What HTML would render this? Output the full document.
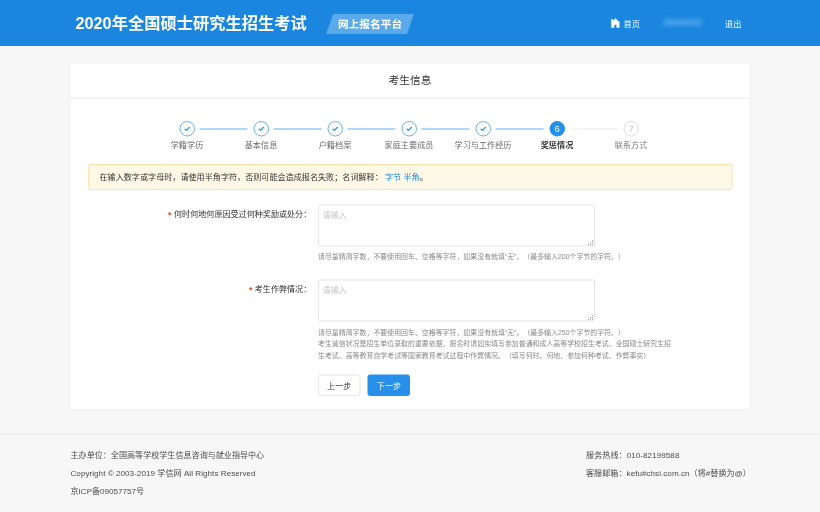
<!DOCTYPE html>
<html lang="zh-CN">
<head>
<meta charset="utf-8">
<title>2020年全国硕士研究生招生考试 网上报名平台</title>
<style>
*{box-sizing:border-box;margin:0;padding:0}
html,body{width:820px;height:512px;overflow:hidden;background:#f7f7f7}
body{text-spacing-trim:space-all;font-family:"Liberation Sans","Noto Sans CJK SC",sans-serif;color:#333}
#stage{position:absolute;left:0;top:0;width:1640px;height:1024px;transform:scale(.5);transform-origin:0 0;background:#f7f7f7;overflow:hidden;font-size:16px}
.abs{position:absolute;white-space:nowrap}
/* header */
#hdr{position:absolute;left:0;top:0;width:1640px;height:91.5px;background:#1a86e0}
#title{left:151px;top:22px;font-size:32.5px;line-height:50px;font-weight:bold;color:#fff;letter-spacing:0}
#badge{position:absolute;left:652px;top:27.2px;width:176px;height:41.2px;background:#5aa9eb;clip-path:polygon(14.6px 0,100% 0,162px 100%,0 100%)}
#badgetxt{left:652.5px;top:28.5px;width:175px;height:40px;line-height:40px;text-align:center;color:#fff;font-weight:bold;font-size:21.4px}
.nav{color:#fff;font-size:16.4px;line-height:24px;top:35px}
#blur{position:absolute;left:1326px;top:39px;width:78px;height:12px;border-radius:6px;background:#4fa3ea;filter:blur(5px)}
/* card */
#card{position:absolute;left:141px;top:127px;width:1358px;height:691px;background:#fff;box-shadow:0 0 0 2px #f1f1f1,2px 2px 6px rgba(0,0,0,.04)}
#cardhd{position:absolute;left:0;top:0;width:100%;height:71px;border-bottom:3px solid #f1f1f1;text-align:center;font-size:21.4px;line-height:68px;color:#333}
/* steps */
.circ{position:absolute;width:31px;height:31px;border-radius:50%;border:2px solid #62b0f0;background:#fff;top:242px}
.circ svg{position:absolute;left:0;top:0;width:27px;height:27px}
.ln{position:absolute;height:2px;top:257px;background:#5fb0f1;width:96px}
.lbl{position:absolute;top:276px;width:160px;text-align:center;font-size:16.3px;line-height:28px;color:#6a6a6a}
/* notice */
#notice{position:absolute;left:176px;top:328px;width:1289px;height:52px;background:#fef8e6;border:2px solid #fae2ad;border-radius:5px;font-size:16.2px;line-height:48px;padding-left:21px;color:#333;white-space:nowrap}
#notice a{color:#1b86e0}
/* form */
.flabel{position:absolute;width:400px;text-align:right;font-size:16.15px;line-height:24px;color:#333}
.star{position:absolute;color:#f2401c;font-weight:bold;font-size:17px;line-height:20px;width:10px;text-align:center}
.ta{position:absolute;left:636px;width:554px;height:84px;border:2px solid #e2e4e8;border-radius:5px;background:#fff;font-size:16.3px;color:#c6c6c6;padding:6px 7px;line-height:24px}
.ta:after{content:"";position:absolute;left:546px;top:77.5px;width:2px;height:2px;background:#9a9a9a;box-shadow:-4px 0 #9a9a9a,-8px 0 #9a9a9a,0 -4px #9a9a9a,-4px -4px #9a9a9a,0 -8px #9a9a9a}
.hint{position:absolute;left:636px;font-size:13.85px;line-height:23px;color:#888;white-space:nowrap}
.btn{position:absolute;top:748.5px;width:85px;height:43.5px;border-radius:6px;font-size:16.2px;line-height:42px;text-align:center}
#prev{left:636px;border:2px solid #e3e5e9;color:#333;background:#fff;line-height:40px}
#next{left:735.4px;background:#2690ea;color:#fff;line-height:44px}
/* footer */
#ftline{position:absolute;left:0;top:865.5px;width:1640px;height:3px;background:#eee}
.ft{font-size:16.15px;line-height:24px;color:#4a4a4a}
</style>
</head>
<body>
<div id="stage">
  <div id="hdr"></div>
  <div id="title" class="abs">2020年全国硕士研究生招生考试</div>
  <div id="badge"></div>
  <div id="badgetxt" class="abs">网上报名平台</div>
  <svg class="abs" style="left:1221px;top:36px" width="20" height="20" viewBox="0 0 20 20"><path d="M10 0.3 L19.6 9.8 L17.8 9.8 L17.8 19.5 L11.9 19.5 L11.9 13.4 L7.7 13.4 L7.7 19.5 L1.4 19.5 L1.4 9.8 L0.2 9.8 L1.4 8.6 L1.4 2.4 L4.7 2.4 L4.7 5.5 Z" fill="#fff"/></svg>
  <div class="abs nav" style="left:1247px">首页</div>
  <div id="blur"></div>
  <div class="abs nav" style="left:1450px">退出</div>

  <div id="card">
    <div id="cardhd">考生信息</div>
  </div>

  <!-- steps -->
  <div id="steps">
    <div class="ln" style="left:399px"></div>
    <div class="ln" style="left:547px"></div>
    <div class="ln" style="left:695px"></div>
    <div class="ln" style="left:843px"></div>
    <div class="ln" style="left:991px"></div>
    <div class="ln" style="left:1139px;background:#ececec"></div>

    <div class="circ" style="left:359px"><svg viewBox="0 0 27 27"><path d="M8.5 13.5 L12 17 L18.5 10" fill="none" stroke="#3391ea" stroke-width="2.4"/></svg></div>
    <div class="circ" style="left:507px"><svg viewBox="0 0 27 27"><path d="M8.5 13.5 L12 17 L18.5 10" fill="none" stroke="#3391ea" stroke-width="2.4"/></svg></div>
    <div class="circ" style="left:655px"><svg viewBox="0 0 27 27"><path d="M8.5 13.5 L12 17 L18.5 10" fill="none" stroke="#3391ea" stroke-width="2.4"/></svg></div>
    <div class="circ" style="left:803px"><svg viewBox="0 0 27 27"><path d="M8.5 13.5 L12 17 L18.5 10" fill="none" stroke="#3391ea" stroke-width="2.4"/></svg></div>
    <div class="circ" style="left:951px"><svg viewBox="0 0 27 27"><path d="M8.5 13.5 L12 17 L18.5 10" fill="none" stroke="#3391ea" stroke-width="2.4"/></svg></div>
    <div class="circ" style="left:1099px;background:#2590ea;border-color:#2590ea;color:#fff;font-size:19px;line-height:27px;text-align:center">6</div>
    <div class="circ" style="left:1247px;border-color:#dedede;color:#c6c6c6;font-size:19px;line-height:27px;text-align:center">7</div>

    <div class="lbl" style="left:294px">学籍学历</div>
    <div class="lbl" style="left:442px">基本信息</div>
    <div class="lbl" style="left:590px">户籍档案</div>
    <div class="lbl" style="left:738px">家庭主要成员</div>
    <div class="lbl" style="left:886px">学习与工作经历</div>
    <div class="lbl" style="left:1034px;color:#3a3a3a;font-weight:bold">奖惩情况</div>
    <div class="lbl" style="left:1182px;color:#7c7c7c">联系方式</div>
  </div>

  <div id="notice">在输入数字或字母时，请使用半角字符，否则可能会造成报名失败；名词解释： <a>字节</a> <a>半角</a>。</div>

  <div class="flabel" style="left:222.5px;top:416px">何时何地何原因受过何种奖励或处分：</div>
  <div class="star" style="left:334.5px;top:421px">*</div>
  <div class="star" style="left:496.3px;top:571px">*</div>
  <div class="ta" style="top:408.5px">请输入</div>
  <div class="hint" style="top:501px">请尽量精简字数，不要使用回车、空格等字符，如果没有就填“无”。（最多输入200个字节的字符。）</div>

  <div class="flabel" style="left:222.5px;top:566px">考生作弊情况：</div>
  <div class="ta" style="top:558.5px">请输入</div>
  <div class="hint" style="top:653px">请尽量精简字数，不要使用回车、空格等字符，如果没有就填“无”。（最多输入250个字节的字符。）</div>
  <div class="hint" style="top:676px">考生诚信状况是招生单位录取的重要依据，报名时请如实填写参加普通和成人高等学校招生考试、全国硕士研究生招</div>
  <div class="hint" style="top:699px">生考试、高等教育自学考试等国家教育考试过程中作弊情况。（填写何时、何地、参加何种考试、作弊事实）</div>

  <div class="btn" id="prev">上一步</div>
  <div class="btn" id="next">下一步</div>

  <div id="ftline"></div>
  <div class="abs ft" style="left:141px;top:898px">主办单位：全国高等学校学生信息咨询与就业指导中心</div>
  <div class="abs ft" style="left:141px;top:933px;letter-spacing:.09px">Copyright © 2003-2019 学信网 All Rights Reserved</div>
  <div class="abs ft" style="left:141px;top:970px">京ICP备09057757号</div>
  <div class="abs ft" style="left:1172px;top:898px;letter-spacing:.12px">服务热线：010-82199588</div>
  <div class="abs ft" style="left:1172px;top:933px;letter-spacing:.08px">客服邮箱：kefu#chsi.com.cn（将#替换为@）</div>
</div>
</body>
</html>
